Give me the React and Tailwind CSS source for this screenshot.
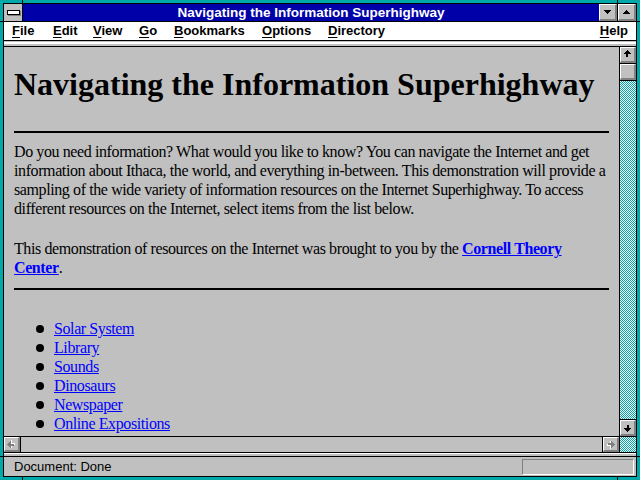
import React from 'react';

// Windows 3.1 style browser window showing a simple HTML page

const Bevel = ({ className = '', children }) => (
  <div
    className={
      'bg-[#c0c0c0] border-t border-l border-t-white border-l-white border-b-2 border-r-2 border-b-[#808080] border-r-[#808080] flex items-center justify-center ' +
      className
    }
  >
    {children}
  </div>
);

const Arrow = ({ dir, disabled }) => {
  // arrow drawn pointing up, rotated for the other directions
  const rot = { up: 0, right: 90, down: 180, left: 270 }[dir];
  const shape = 'M4.5 0 L9 4.5 H6 V8 H3 V4.5 H0 Z';
  return (
    <svg width="9" height="9" viewBox="0 0 10 10" shapeRendering="crispEdges" style={{ transform: `rotate(${rot}deg)` }}>
      {disabled ? (
        <>
          <path d={shape} fill="#ffffff" transform="translate(1 1)" />
          <path d={shape} fill="#808080" />
        </>
      ) : (
        <path d={shape} fill="#000000" />
      )}
    </svg>
  );
};

const Tri = ({ down }) => (
  <svg width="9" height="5" viewBox="0 0 9 5" shapeRendering="crispEdges">
    <path d={down ? 'M1 0 H8 L4.5 4 Z' : 'M4.5 0 L8 4 H1 Z'} fill="#000" />
  </svg>
);

const dither =
  'bg-[repeating-conic-gradient(#00a8a8_0_25%,#ffffff_0_50%)] bg-[length:2px_2px]';

const menu = [
  { label: 'File', w: 'w-[41px]' },
  { label: 'Edit', w: 'w-[40px]' },
  { label: 'View', w: 'w-[46px]' },
  { label: 'Go', w: 'w-[35px]' },
  { label: 'Bookmarks', w: 'w-[88px]' },
  { label: 'Options', w: 'w-[66px]' },
  { label: 'Directory', w: 'w-[70px]' },
];

const links = ['Solar System', 'Library', 'Sounds', 'Dinosaurs', 'Newspaper', 'Online Expositions'];

const MenuItem = ({ label }) => (
  <span>
    <span className="underline underline-offset-2">{label[0]}</span>
    {label.slice(1)}
  </span>
);

export default function App() {
  return (
    <div className="relative w-[640px] h-[480px] bg-[#00a8a8] p-[3px] font-['Liberation_Sans',Arial,sans-serif] overflow-hidden">
      {/* resize ticks in the frame */}
      <div className="absolute left-[22px] top-0 w-px h-[3px] bg-black" />
      <div className="absolute left-[617px] top-0 w-px h-[3px] bg-black" />
      <div className="absolute left-[22px] bottom-0 w-px h-[3px] bg-black" />
      <div className="absolute left-[617px] bottom-0 w-px h-[3px] bg-black" />
      <div className="absolute left-0 top-[21px] w-[3px] h-px bg-black" />
      <div className="absolute right-0 top-[21px] w-[3px] h-px bg-black" />
      <div className="absolute left-0 top-[456px] w-[3px] h-px bg-black" />
      <div className="absolute right-0 top-[456px] w-[3px] h-px bg-black" />

      <div className="h-full border border-black bg-[#c0c0c0] flex flex-col">
        {/* title bar */}
        <div className="flex h-[18px] border-b border-black shrink-0">
          <div className="w-[19px] border-r border-black bg-[#c0c0c0] flex items-center justify-center">
            <div className="w-[13px] h-[5px] border border-black bg-white shadow-[1px_1px_0_#808080]" />
          </div>
          <div className="flex-1 bg-[#0000a8] text-white font-bold text-[13.5px] leading-none flex items-center justify-center">
            Navigating the Information Superhighway
          </div>
          <Bevel className="w-[18px]">
            <Tri down />
          </Bevel>
          <div className="border-l border-black flex">
            <Bevel className="w-[18px]">
              <Tri />
            </Bevel>
          </div>
        </div>

        {/* menu bar */}
        <div className="flex items-center h-[19px] bg-white border-b border-black text-[13px] font-bold text-black pl-[8px] pr-[8px] shrink-0">
          {menu.map((m) => (
            <div key={m.label} className={m.w}>
              <MenuItem label={m.label} />
            </div>
          ))}
          <div className="ml-auto">
            <MenuItem label="Help" />
          </div>
        </div>

        {/* empty toolbar strip */}
        <div className="h-[6px] border-b border-black pt-px shrink-0">
          <div className="h-[2px] bg-white" />
        </div>

        {/* document area */}
        <div className="flex flex-1 min-h-0">
          <div className="flex-1 overflow-hidden px-[10px] pt-[19px] font-['Liberation_Serif','Times_New_Roman',serif] text-black">
            <h1 className="text-[32px] font-bold leading-[37px] whitespace-nowrap">Navigating the Information Superhighway</h1>
            <div className="h-[2px] bg-black mt-[28px]" />
            <p className="text-[16px] leading-[19px] tracking-[-0.4px] whitespace-nowrap mt-[9px]">
              Do you need information? What would you like to know? You can navigate the Internet and get
              <br />
              information about Ithaca, the world, and everything in-between. This demonstration will provide a
              <br />
              sampling of the wide variety of information resources on the Internet Superhighway. To access
              <br />
              different resources on the Internet, select items from the list below.
            </p>
            <p className="text-[16px] leading-[19px] tracking-[-0.4px] whitespace-nowrap mt-[21px]">
              This demonstration of resources on the Internet was brought to you by the{' '}
              <a href="#" className="font-bold text-[#0000ff] underline">
                Cornell Theory
                <br />
                Center
              </a>
              .
            </p>
            <div className="h-[2px] bg-black mt-[11px]" />
            <ul className="mt-[29px] text-[16px] leading-[19px] tracking-[-0.4px]">
              {links.map((l) => (
                <li key={l} className="flex items-center pl-[22px] whitespace-nowrap">
                  <span className="w-[8px] h-[8px] rounded-full bg-black mr-[10px] shrink-0" />
                  <a href="#" className="text-[#0000ff] underline">
                    {l}
                  </a>
                </li>
              ))}
            </ul>
          </div>

          {/* vertical scrollbar */}
          <div className="w-[17px] border-l border-black flex flex-col">
            <Bevel className="h-[16px]">
              <Arrow dir="up" />
            </Bevel>
            <div className="border-t border-black" />
            <Bevel className="h-[16px]" />
            <div className="border-t border-black" />
            <div className={'flex-1 ' + dither} />
            <div className="border-t border-black" />
            <Bevel className="h-[16px]">
              <Arrow dir="down" />
            </Bevel>
          </div>
        </div>

        {/* horizontal scrollbar */}
        <div className="flex h-[16px] border-t border-black shrink-0">
          <Bevel className="w-[16px]">
            <Arrow dir="left" disabled />
          </Bevel>
          <div className="flex-1 border-l border-black" />
          <div className="border-l border-black flex">
            <Bevel className="w-[16px]">
              <Arrow dir="right" disabled />
            </Bevel>
          </div>
          <div className={'w-[17px] border-l border-black ' + dither} />
        </div>

        {/* frame strip */}
        <div className="h-[5px] border-t border-b border-black shrink-0">
          <div className="h-px bg-white" />
        </div>

        {/* status bar */}
        <div className="flex items-center h-[19px] shrink-0 pl-[10px] pr-[2px] text-[13px] text-black">
          <span>Document: Done</span>
          <div className="ml-auto w-[112px] h-[16px] border border-t-[#808080] border-l-[#808080] border-b-white border-r-white" />
        </div>
      </div>
    </div>
  );
}
